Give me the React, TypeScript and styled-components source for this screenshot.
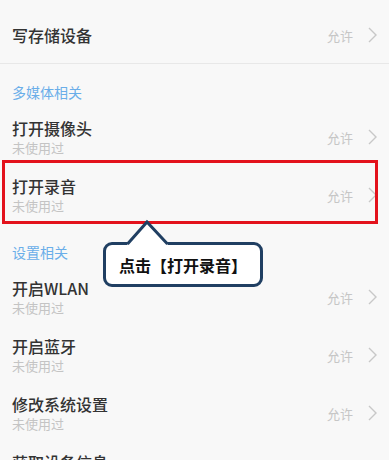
import React from "react";
import styled, { createGlobalStyle } from "styled-components";

const Global = createGlobalStyle`
  html, body { margin: 0; padding: 0; background: #f8f8f8; }
  body { font-family: "Noto Sans CJK SC", "Noto Sans", sans-serif; }
  * { box-sizing: border-box; }
`;

const Page = styled.div`
  position: relative;
  width: 389px;
  height: 460px;
  overflow: hidden;
  background: #f8f8f8;
`;

const Row = styled.div<{ $single?: boolean }>`
  display: flex;
  align-items: center;
  justify-content: space-between;
  height: ${(p) => (p.$single ? "63px" : "58px")};
  padding: ${(p) => (p.$single ? "7px 12px 0 12px" : "0 12px")};
`;

const Texts = styled.div`
  display: flex;
  flex-direction: column;
`;

const Title = styled.div`
  font-size: 16px;
  line-height: 20px;
  font-weight: 500;
  color: #333333;
`;

const Sub = styled.div`
  margin-top: 2px;
  font-size: 13px;
  line-height: 16px;
  color: #c4c4c4;
`;

const Right = styled.div`
  display: flex;
  align-items: center;
  gap: 15px;
  font-size: 13px;
  color: #c6c6c6;
`;

const Divider = styled.div`
  height: 1px;
  background: #e8e8e8;
`;

const Header = styled.div`
  height: 44px;
  padding: 20px 12px 0 12px;
  font-size: 14px;
  line-height: 16px;
  color: #6aaee9;
`;

const Highlight = styled.div`
  position: absolute;
  left: 2px;
  top: 160px;
  width: 376px;
  height: 64px;
  border: 3px solid #e3121c;
  pointer-events: none;
`;

const Bubble = styled.div`
  position: absolute;
  left: 103px;
  top: 242px;
  width: 160px;
  height: 45px;
  border: 3px solid #203f62;
  border-radius: 9px;
  background: #ffffff;
  display: flex;
  align-items: center;
  justify-content: center;
  font-size: 16px;
  font-weight: 700;
  color: #111111;
`;

const Tail = styled.svg`
  position: absolute;
  left: 20px;
  top: -25px;
  overflow: visible;
`;

const Chevron = () => (
  <svg width="9" height="16" viewBox="0 0 9 16">
    <polyline points="1,1 8,8 1,15" fill="none" stroke="#c8c8c8" strokeWidth="1.4" />
  </svg>
);

const Allow = () => (
  <Right>
    <span>允许</span>
    <Chevron />
  </Right>
);

const Item = ({ title }: { title: string }) => (
  <Row>
    <Texts>
      <Title>{title}</Title>
      <Sub>未使用过</Sub>
    </Texts>
    <Allow />
  </Row>
);

export default function App() {
  return (
    <>
      <Global />
      <Page>
        <Row $single>
          <Title>写存储设备</Title>
          <Allow />
        </Row>
        <Divider />
        <Header>多媒体相关</Header>
        <Item title="打开摄像头" />
        <Item title="打开录音" />
        <Header>设置相关</Header>
        <Item title="开启WLAN" />
        <Item title="开启蓝牙" />
        <Item title="修改系统设置" />
        <Item title="获取设备信息" />
        <Highlight />
        <Bubble>
          <Tail width="46" height="26" viewBox="0 0 46 26">
            <polygon points="21,2 41.5,24 41.5,27 1.5,27 1.5,24" fill="#ffffff" />
            <polyline points="1.5,24 21,2 41.5,24" fill="none" stroke="#203f62" strokeWidth="3" strokeLinejoin="miter" />
          </Tail>
          点击【打开录音】
        </Bubble>
      </Page>
    </>
  );
}
